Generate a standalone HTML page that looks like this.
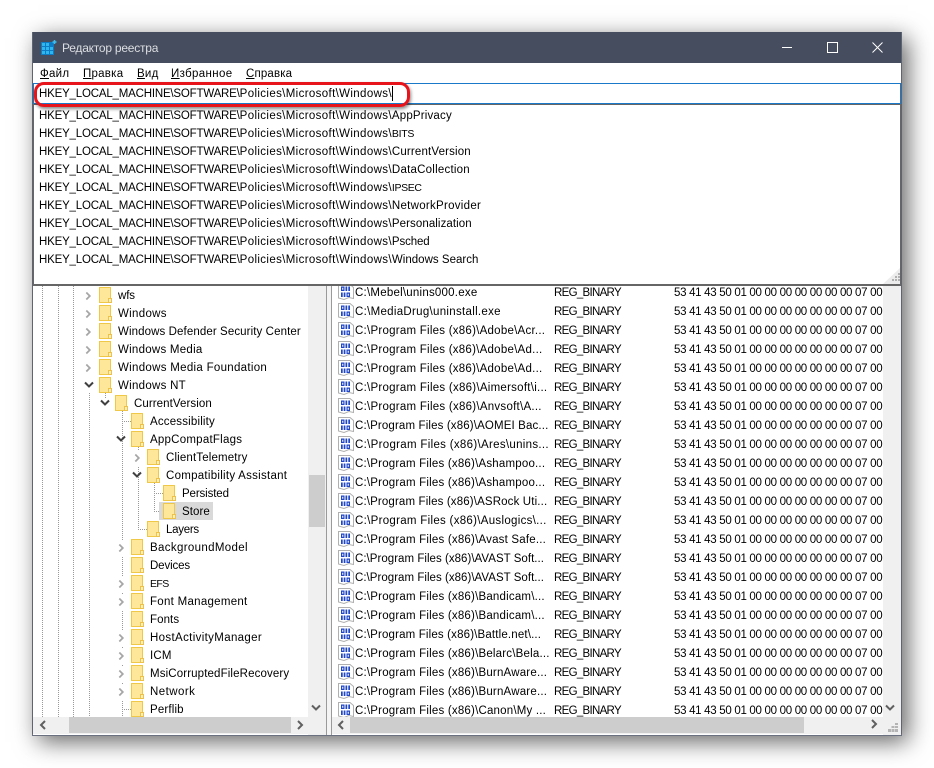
<!DOCTYPE html>
<html lang="ru"><head><meta charset="utf-8"><title>Редактор реестра</title>
<style>
html,body{margin:0;padding:0;width:934px;height:768px;overflow:hidden;background:#fff}
body{position:relative;font:12px/16px "Liberation Sans",sans-serif;color:#000}
#win{position:absolute;left:32px;top:32px;width:870px;height:704px;background:#fff;box-shadow:6px 6px 22px rgba(0,0,0,.6)}
.a{position:absolute;white-space:pre}
.t{position:absolute;white-space:pre;font-size:11.5px;letter-spacing:.25px;height:16px;line-height:16px;margin-top:1px}
.n{letter-spacing:.2px}
.b{letter-spacing:-.7px}
.d{letter-spacing:-.3px}
.p{letter-spacing:-.19px}
.q{letter-spacing:.36px}
svg.i{position:absolute;overflow:visible}
svg.i[width="7"]{background:#fff;box-shadow:0 0 0 3px #fff;transform:translateY(1px)}
#tree,#list,#drop{position:absolute;overflow:hidden}
.v{position:absolute;width:1px;background:repeating-linear-gradient(#999 0 1px,transparent 1px 2px)}
.h{position:absolute;height:1px;background:repeating-linear-gradient(90deg,#999 0 1px,transparent 1px 2px)}
u{text-decoration:underline}
</style></head><body>
<svg width="0" height="0" style="position:absolute"><defs>
<symbol id="f" viewBox="0 0 13 16"><path d="M.5.5H11.500V15.500H.5Z" fill="#ffe799" stroke="#f0c848"/><path d="M9.500 11.500H12.500V15.500H9.500Z" fill="#fff0c0" stroke="#eec24a"/></symbol>
<symbol id="r" viewBox="0 0 16 16"><path d="M.5.5H12L15.500 3.500V14.500L11 13.500L6 15.500L.5 14Z" fill="#fff" stroke="#b0b0b0"/><path d="M3 2.500h3.500v4.500H3zM7.500 2.500h1.700v4.500H7.500zM10.300 2.500h1.700v4.500h-1.700zM3 8.500h1.700v4.500H3zM5.700 8.500h1.700v4.500H5.700zM8.500 8.500h3.500v4.500H8.500z" fill="#1f46c8"/><path d="M4.200 3.700h1.100v2.100H4.200zM9.700 9.700h1.100v2.100H9.700z" fill="#fff"/></symbol>
<symbol id="cr" viewBox="0 0 8 10"><path d="M1.500 1L5.500 5L1.500 9" fill="none" stroke="#a6a6a6" stroke-width="2"/></symbol>
<symbol id="cd" viewBox="0 0 10 8"><path d="M1 1.500L5 5.500L9 1.500" fill="none" stroke="#404040" stroke-width="2"/></symbol>
<symbol id="sl" viewBox="0 0 8 10"><path d="M6 1L2 5L6 9" fill="none" stroke="#606060" stroke-width="2"/></symbol>
<symbol id="sr" viewBox="0 0 8 10"><path d="M2 1L6 5L2 9" fill="none" stroke="#606060" stroke-width="2"/></symbol>
<symbol id="sd" viewBox="0 0 10 8"><path d="M1 1.500L5 5.500L9 1.500" fill="none" stroke="#606060" stroke-width="2"/></symbol>
</defs></svg>

<div id="win"></div>
<!-- frame -->
<div class="a" style="left:32px;top:32px;width:870px;height:31px;background:#464d5e"></div>
<div class="a" style="left:32px;top:32px;width:1px;height:704px;background:#5e6472"></div>
<div class="a" style="left:901px;top:32px;width:1px;height:704px;background:#5e6472"></div>
<div class="a" style="left:32px;top:734px;width:870px;height:2px;background:#6a7080"></div>

<!-- title -->
<svg class="i" style="left:41px;top:40px" width="16" height="15"><rect x="0" y="2" width="13" height="13" fill="#0e7cc4"/><path d="M1 3h3v3H1zM5 3h3v3H5zM1 7h3v3H1zM5 7h3v3H5zM9 7h3v3H9zM1 11h3v3H1zM5 11h3v3H5zM9 11h3v3H9z" fill="#2fb6ee"/><path d="M11.500 2h4M13.500 0v4" stroke="#3cc0f2" stroke-width="1.500"/></svg>
<div class="t" style="left:62px;top:39px;color:#dcdee2;font-size:12px;letter-spacing:-.23px">Редактор реестра</div>
<svg class="i" style="left:782px;top:47px" width="12" height="1"><rect width="10" height="1" fill="#fff"/></svg>
<div class="a" style="left:827px;top:42px;width:9px;height:9px;border:1px solid #fff"></div>
<svg class="i" style="left:872px;top:42px" width="11" height="11"><path d="M.5.5L10.500 10.500M10.500.5L.5 10.500" stroke="#fff" fill="none"/></svg>

<!-- menu -->
<div class="t" style="left:40px;top:65px"><u>Ф</u>айл</div>
<div class="t" style="left:83px;top:65px;letter-spacing:.25px"><u>П</u>равка</div>
<div class="t" style="left:137px;top:65px"><u>В</u>ид</div>
<div class="t" style="left:171px;top:65px;letter-spacing:.35px"><u>И</u>збранное</div>
<div class="t" style="left:246px;top:65px;letter-spacing:.15px"><u>С</u>правка</div>

<!-- tree -->
<div id="tree" style="left:33px;top:286px;width:293px;height:449px;background:#fff">
<div style="position:absolute;left:-33px;top:-286px;width:934px;height:768px">
<div class="v" style="left:42px;top:286px;height:431px"></div>
<div class="v" style="left:58px;top:286px;height:431px"></div>
<div class="v" style="left:73px;top:286px;height:431px"></div>
<div class="v" style="left:89px;top:393px;height:324px"></div>
<div class="v" style="left:105px;top:393px;height:5px"></div>
<div class="v" style="left:122px;top:411px;height:306px"></div>
<div class="v" style="left:138px;top:447px;height:83px"></div>
<div class="v" style="left:154px;top:483px;height:29px"></div>
<div class="h" style="left:122px;top:421px;height:1px;width:9px"></div>
<div class="h" style="left:138px;top:529px;width:9px"></div>
<div class="h" style="left:154px;top:493px;width:9px"></div>
<div class="h" style="left:154px;top:511px;width:9px"></div>
<div class="h" style="left:122px;top:709px;width:9px"></div>

<div class="a" style="left:159px;top:502px;width:54px;height:18px;background:#d9d9d9"></div>

<svg class="i" style="left:85px;top:290px" width="7" height="10"><use href="#cr"/></svg><svg class="i" style="left:99px;top:287px" width="13" height="16"><use href="#f"/></svg><div class="t" style="left:118px;top:287px;letter-spacing:-.1px">wfs</div>
<svg class="i" style="left:85px;top:308px" width="7" height="10"><use href="#cr"/></svg><svg class="i" style="left:99px;top:305px" width="13" height="16"><use href="#f"/></svg><div class="t" style="left:118px;top:305px;letter-spacing:.31px">Windows</div>
<svg class="i" style="left:85px;top:326px" width="7" height="10"><use href="#cr"/></svg><svg class="i" style="left:99px;top:323px" width="13" height="16"><use href="#f"/></svg><div class="t" style="left:118px;top:323px;letter-spacing:.1px">Windows Defender Security Center</div>
<svg class="i" style="left:85px;top:344px" width="7" height="10"><use href="#cr"/></svg><svg class="i" style="left:99px;top:341px" width="13" height="16"><use href="#f"/></svg><div class="t" style="left:118px;top:341px;letter-spacing:.26px">Windows Media</div>
<svg class="i" style="left:85px;top:362px" width="7" height="10"><use href="#cr"/></svg><svg class="i" style="left:99px;top:359px" width="13" height="16"><use href="#f"/></svg><div class="t" style="left:118px;top:359px;letter-spacing:.3px">Windows Media Foundation</div>
<svg class="i" style="left:84px;top:381px" width="10" height="8"><use href="#cd"/></svg><svg class="i" style="left:99px;top:377px" width="13" height="16"><use href="#f"/></svg><div class="t" style="left:118px;top:377px;letter-spacing:.28px">Windows NT</div>
<svg class="i" style="left:100px;top:399px" width="10" height="8"><use href="#cd"/></svg><svg class="i" style="left:115px;top:395px" width="13" height="16"><use href="#f"/></svg><div class="t" style="left:134px;top:395px;letter-spacing:.08px">CurrentVersion</div>
<svg class="i" style="left:131px;top:413px" width="13" height="16"><use href="#f"/></svg><div class="t" style="left:150px;top:413px;letter-spacing:.18px">Accessibility</div>
<svg class="i" style="left:116px;top:435px" width="10" height="8"><use href="#cd"/></svg><svg class="i" style="left:131px;top:431px" width="13" height="16"><use href="#f"/></svg><div class="t" style="left:150px;top:431px;letter-spacing:.24px">AppCompatFlags</div>
<svg class="i" style="left:134px;top:452px" width="7" height="10"><use href="#cr"/></svg><svg class="i" style="left:147px;top:449px" width="13" height="16"><use href="#f"/></svg><div class="t" style="left:166px;top:449px;letter-spacing:.15px">ClientTelemetry</div>
<svg class="i" style="left:132px;top:471px" width="10" height="8"><use href="#cd"/></svg><svg class="i" style="left:147px;top:467px" width="13" height="16"><use href="#f"/></svg><div class="t" style="left:166px;top:467px;letter-spacing:.27px">Compatibility Assistant</div>
<svg class="i" style="left:163px;top:485px" width="13" height="16"><use href="#f"/></svg><div class="t" style="left:182px;top:485px;letter-spacing:-.12px">Persisted</div>
<svg class="i" style="left:163px;top:503px" width="13" height="16"><use href="#f"/></svg><div class="t" style="left:182px;top:503px;letter-spacing:.08px">Store</div>
<svg class="i" style="left:147px;top:521px" width="13" height="16"><use href="#f"/></svg><div class="t" style="left:166px;top:521px;letter-spacing:-.28px">Layers</div>
<svg class="i" style="left:118px;top:542px" width="7" height="10"><use href="#cr"/></svg><svg class="i" style="left:131px;top:539px" width="13" height="16"><use href="#f"/></svg><div class="t" style="left:150px;top:539px;letter-spacing:.35px">BackgroundModel</div>
<svg class="i" style="left:131px;top:557px" width="13" height="16"><use href="#f"/></svg><div class="t" style="left:150px;top:557px;letter-spacing:-.12px">Devices</div>
<svg class="i" style="left:118px;top:578px" width="7" height="10"><use href="#cr"/></svg><svg class="i" style="left:131px;top:575px" width="13" height="16"><use href="#f"/></svg><div class="t" style="left:150px;top:575px;font-size:10.5px;letter-spacing:-.6px">EFS</div>
<svg class="i" style="left:118px;top:596px" width="7" height="10"><use href="#cr"/></svg><svg class="i" style="left:131px;top:593px" width="13" height="16"><use href="#f"/></svg><div class="t" style="left:150px;top:593px;letter-spacing:.28px">Font Management</div>
<svg class="i" style="left:131px;top:611px" width="13" height="16"><use href="#f"/></svg><div class="t" style="left:150px;top:611px;letter-spacing:.08px">Fonts</div>
<svg class="i" style="left:118px;top:632px" width="7" height="10"><use href="#cr"/></svg><svg class="i" style="left:131px;top:629px" width="13" height="16"><use href="#f"/></svg><div class="t" style="left:150px;top:629px;letter-spacing:.35px">HostActivityManager</div>
<svg class="i" style="left:118px;top:650px" width="7" height="10"><use href="#cr"/></svg><svg class="i" style="left:131px;top:647px" width="13" height="16"><use href="#f"/></svg><div class="t" style="left:150px;top:647px;letter-spacing:.2px">ICM</div>
<svg class="i" style="left:118px;top:668px" width="7" height="10"><use href="#cr"/></svg><svg class="i" style="left:131px;top:665px" width="13" height="16"><use href="#f"/></svg><div class="t" style="left:150px;top:665px;letter-spacing:.13px">MsiCorruptedFileRecovery</div>
<svg class="i" style="left:118px;top:686px" width="7" height="10"><use href="#cr"/></svg><svg class="i" style="left:131px;top:683px" width="13" height="16"><use href="#f"/></svg><div class="t" style="left:150px;top:683px;letter-spacing:.45px">Network</div>
<svg class="i" style="left:131px;top:701px" width="13" height="16"><use href="#f"/></svg><div class="t" style="left:150px;top:701px;letter-spacing:.16px">Perflib</div>

<!-- tree scrollbars -->
<div class="a" style="left:308px;top:286px;width:18px;height:449px;background:#f0f0f0"></div>
<div class="a" style="left:309px;top:475px;width:16px;height:52px;background:#cdcdcd"></div>
<svg class="i" style="left:311px;top:704px" width="10" height="8"><use href="#sd"/></svg>
<div class="a" style="left:33px;top:717px;width:293px;height:17px;background:#f0f0f0"></div>
<div class="a" style="left:69px;top:717px;width:222px;height:16px;background:#cdcdcd"></div>
<svg class="i" style="left:39px;top:720px" width="8" height="10"><use href="#sl"/></svg>
<svg class="i" style="left:296px;top:720px" width="8" height="10"><use href="#sr"/></svg>
</div></div>

<!-- splitter -->
<div class="a" style="left:326px;top:286px;width:6px;height:449px;background:#f4f4f4;border-left:1px solid #9a9a9a;border-right:1px solid #9a9a9a;box-sizing:border-box"></div>

<!-- list -->
<div id="list" style="left:332px;top:286px;width:569px;height:449px;background:#fff">
<div style="position:absolute;left:-332px;top:-286px;width:934px;height:768px">
<svg class="i" style="left:338px;top:284px" width="16" height="16"><use href="#r"/></svg><div class="t n" style="left:355px;top:284px;letter-spacing:.23px">C:\Mebel\unins000.exe</div><div class="t b" style="left:554px;top:284px">REG_BINARY</div>
<svg class="i" style="left:338px;top:303px" width="16" height="16"><use href="#r"/></svg><div class="t n" style="left:355px;top:303px;letter-spacing:.3px">C:\MediaDrug\uninstall.exe</div><div class="t b" style="left:554px;top:303px">REG_BINARY</div>
<svg class="i" style="left:338px;top:322px" width="16" height="16"><use href="#r"/></svg><div class="t n" style="left:355px;top:322px;letter-spacing:.25px">C:\Program Files (x86)\Adobe\Acr...</div><div class="t b" style="left:554px;top:322px">REG_BINARY</div>
<svg class="i" style="left:338px;top:341px" width="16" height="16"><use href="#r"/></svg><div class="t n" style="left:355px;top:341px;letter-spacing:.25px">C:\Program Files (x86)\Adobe\Ad...</div><div class="t b" style="left:554px;top:341px">REG_BINARY</div>
<svg class="i" style="left:338px;top:360px" width="16" height="16"><use href="#r"/></svg><div class="t n" style="left:355px;top:360px;letter-spacing:.25px">C:\Program Files (x86)\Adobe\Ad...</div><div class="t b" style="left:554px;top:360px">REG_BINARY</div>
<svg class="i" style="left:338px;top:379px" width="16" height="16"><use href="#r"/></svg><div class="t n" style="left:355px;top:379px;letter-spacing:.26px">C:\Program Files (x86)\Aimersoft\i...</div><div class="t b" style="left:554px;top:379px">REG_BINARY</div>
<svg class="i" style="left:338px;top:398px" width="16" height="16"><use href="#r"/></svg><div class="t n" style="left:355px;top:398px;letter-spacing:.26px">C:\Program Files (x86)\Anvsoft\A...</div><div class="t b" style="left:554px;top:398px">REG_BINARY</div>
<svg class="i" style="left:338px;top:417px" width="16" height="16"><use href="#r"/></svg><div class="t n" style="left:355px;top:417px;letter-spacing:.14px">C:\Program Files (x86)\AOMEI Bac...</div><div class="t b" style="left:554px;top:417px">REG_BINARY</div>
<svg class="i" style="left:338px;top:436px" width="16" height="16"><use href="#r"/></svg><div class="t n" style="left:355px;top:436px;letter-spacing:.31px">C:\Program Files (x86)\Ares\unins...</div><div class="t b" style="left:554px;top:436px">REG_BINARY</div>
<svg class="i" style="left:338px;top:455px" width="16" height="16"><use href="#r"/></svg><div class="t n" style="left:355px;top:455px">C:\Program Files (x86)\Ashampoo...</div><div class="t b" style="left:554px;top:455px">REG_BINARY</div>
<svg class="i" style="left:338px;top:474px" width="16" height="16"><use href="#r"/></svg><div class="t n" style="left:355px;top:474px">C:\Program Files (x86)\Ashampoo...</div><div class="t b" style="left:554px;top:474px">REG_BINARY</div>
<svg class="i" style="left:338px;top:493px" width="16" height="16"><use href="#r"/></svg><div class="t n" style="left:355px;top:493px;letter-spacing:.14px">C:\Program Files (x86)\ASRock Uti...</div><div class="t b" style="left:554px;top:493px">REG_BINARY</div>
<svg class="i" style="left:338px;top:512px" width="16" height="16"><use href="#r"/></svg><div class="t n" style="left:355px;top:512px;letter-spacing:.3px">C:\Program Files (x86)\Auslogics\...</div><div class="t b" style="left:554px;top:512px">REG_BINARY</div>
<svg class="i" style="left:338px;top:531px" width="16" height="16"><use href="#r"/></svg><div class="t n" style="left:355px;top:531px">C:\Program Files (x86)\Avast Safe...</div><div class="t b" style="left:554px;top:531px">REG_BINARY</div>
<svg class="i" style="left:338px;top:550px" width="16" height="16"><use href="#r"/></svg><div class="t n" style="left:355px;top:550px;letter-spacing:.03px">C:\Program Files (x86)\AVAST Soft...</div><div class="t b" style="left:554px;top:550px">REG_BINARY</div>
<svg class="i" style="left:338px;top:569px" width="16" height="16"><use href="#r"/></svg><div class="t n" style="left:355px;top:569px;letter-spacing:.03px">C:\Program Files (x86)\AVAST Soft...</div><div class="t b" style="left:554px;top:569px">REG_BINARY</div>
<svg class="i" style="left:338px;top:588px" width="16" height="16"><use href="#r"/></svg><div class="t n" style="left:355px;top:588px">C:\Program Files (x86)\Bandicam\...</div><div class="t b" style="left:554px;top:588px">REG_BINARY</div>
<svg class="i" style="left:338px;top:607px" width="16" height="16"><use href="#r"/></svg><div class="t n" style="left:355px;top:607px">C:\Program Files (x86)\Bandicam\...</div><div class="t b" style="left:554px;top:607px">REG_BINARY</div>
<svg class="i" style="left:338px;top:626px" width="16" height="16"><use href="#r"/></svg><div class="t n" style="left:355px;top:626px;letter-spacing:.16px">C:\Program Files (x86)\Battle.net\...</div><div class="t b" style="left:554px;top:626px">REG_BINARY</div>
<svg class="i" style="left:338px;top:645px" width="16" height="16"><use href="#r"/></svg><div class="t n" style="left:355px;top:645px">C:\Program Files (x86)\Belarc\Bela...</div><div class="t b" style="left:554px;top:645px">REG_BINARY</div>
<svg class="i" style="left:338px;top:664px" width="16" height="16"><use href="#r"/></svg><div class="t n" style="left:355px;top:664px">C:\Program Files (x86)\BurnAware...</div><div class="t b" style="left:554px;top:664px">REG_BINARY</div>
<svg class="i" style="left:338px;top:683px" width="16" height="16"><use href="#r"/></svg><div class="t n" style="left:355px;top:683px">C:\Program Files (x86)\BurnAware...</div><div class="t b" style="left:554px;top:683px">REG_BINARY</div>
<svg class="i" style="left:338px;top:702px" width="16" height="16"><use href="#r"/></svg><div class="t n" style="left:355px;top:702px">C:\Program Files (x86)\Canon\My ...</div><div class="t b" style="left:554px;top:702px">REG_BINARY</div>

<div style="position:absolute;left:674px;top:284px;width:209px;height:433px;overflow:hidden">
<div class="t d" style="left:0;top:0">53 41 43 50 01 00 00 00 00 00 00 00 07 00</div>
<div class="t d" style="left:0;top:19px">53 41 43 50 01 00 00 00 00 00 00 00 07 00</div>
<div class="t d" style="left:0;top:38px">53 41 43 50 01 00 00 00 00 00 00 00 07 00</div>
<div class="t d" style="left:0;top:57px">53 41 43 50 01 00 00 00 00 00 00 00 07 00</div>
<div class="t d" style="left:0;top:76px">53 41 43 50 01 00 00 00 00 00 00 00 07 00</div>
<div class="t d" style="left:0;top:95px">53 41 43 50 01 00 00 00 00 00 00 00 07 00</div>
<div class="t d" style="left:0;top:114px">53 41 43 50 01 00 00 00 00 00 00 00 07 00</div>
<div class="t d" style="left:0;top:133px">53 41 43 50 01 00 00 00 00 00 00 00 07 00</div>
<div class="t d" style="left:0;top:152px">53 41 43 50 01 00 00 00 00 00 00 00 07 00</div>
<div class="t d" style="left:0;top:171px">53 41 43 50 01 00 00 00 00 00 00 00 07 00</div>
<div class="t d" style="left:0;top:190px">53 41 43 50 01 00 00 00 00 00 00 00 07 00</div>
<div class="t d" style="left:0;top:209px">53 41 43 50 01 00 00 00 00 00 00 00 07 00</div>
<div class="t d" style="left:0;top:228px">53 41 43 50 01 00 00 00 00 00 00 00 07 00</div>
<div class="t d" style="left:0;top:247px">53 41 43 50 01 00 00 00 00 00 00 00 07 00</div>
<div class="t d" style="left:0;top:266px">53 41 43 50 01 00 00 00 00 00 00 00 07 00</div>
<div class="t d" style="left:0;top:285px">53 41 43 50 01 00 00 00 00 00 00 00 07 00</div>
<div class="t d" style="left:0;top:304px">53 41 43 50 01 00 00 00 00 00 00 00 07 00</div>
<div class="t d" style="left:0;top:323px">53 41 43 50 01 00 00 00 00 00 00 00 07 00</div>
<div class="t d" style="left:0;top:342px">53 41 43 50 01 00 00 00 00 00 00 00 07 00</div>
<div class="t d" style="left:0;top:361px">53 41 43 50 01 00 00 00 00 00 00 00 07 00</div>
<div class="t d" style="left:0;top:380px">53 41 43 50 01 00 00 00 00 00 00 00 07 00</div>
<div class="t d" style="left:0;top:399px">53 41 43 50 01 00 00 00 00 00 00 00 07 00</div>
<div class="t d" style="left:0;top:418px">53 41 43 50 01 00 00 00 00 00 00 00 07 00</div>
</div>

<div class="a" style="left:883px;top:286px;width:18px;height:449px;background:#f0f0f0"></div>
<svg class="i" style="left:885px;top:704px" width="10" height="8"><use href="#sd"/></svg>
<div class="a" style="left:332px;top:717px;width:569px;height:17px;background:#f0f0f0"></div>
<div class="a" style="left:350px;top:717px;width:454px;height:16px;background:#cdcdcd"></div>
<svg class="i" style="left:337px;top:720px" width="8" height="10"><use href="#sl"/></svg>
<svg class="i" style="left:870px;top:719px" width="8" height="10"><use href="#sr"/></svg>
<svg class="i" style="left:888px;top:723px" width="12" height="10"><path d="M7 0h3v2H7zM3.500 3h3v2h-3zM7 3h3v2H7zM0 6h3v3H0zM3.500 6h3v3h-3zM7 6h3v3H7z" fill="#b4b4b4"/></svg>
</div></div>

<!-- address bar -->
<div class="a" style="left:33px;top:83px;width:866px;height:19px;border:1px solid #1a79c8;background:#fff"></div>
<div class="t" style="left:39px;top:85px"><span class="p">HKEY_LOCAL_MACHINE\SOFTWARE\</span><span class="q">Policies\Microsoft\Windows\</span></div>
<div class="a" style="left:392px;top:86px;width:1px;height:15px;background:#000"></div>

<!-- dropdown -->
<div id="drop" style="left:33px;top:104px;width:868px;height:182px;background:#fff;border-top:1px solid #666;border-bottom:2px solid #666;border-right:1px solid #666;border-left:1px solid #666;box-sizing:border-box"></div>
<div class="t" style="left:39px;top:107px"><span class="p">HKEY_LOCAL_MACHINE\SOFTWARE\</span><span class="q">Policies\Microsoft\Windows\</span><span style="letter-spacing:.18px">AppPrivacy</span></div>
<div class="t" style="left:39px;top:125px"><span class="p">HKEY_LOCAL_MACHINE\SOFTWARE\</span><span class="q">Policies\Microsoft\Windows\</span><span style="font-size:10.5px;letter-spacing:-.3px">BITS</span></div>
<div class="t" style="left:39px;top:143px"><span class="p">HKEY_LOCAL_MACHINE\SOFTWARE\</span><span class="q">Policies\Microsoft\Windows\</span><span style="letter-spacing:.16px">CurrentVersion</span></div>
<div class="t" style="left:39px;top:161px"><span class="p">HKEY_LOCAL_MACHINE\SOFTWARE\</span><span class="q">Policies\Microsoft\Windows\</span><span style="letter-spacing:.23px">DataCollection</span></div>
<div class="t" style="left:39px;top:179px"><span class="p">HKEY_LOCAL_MACHINE\SOFTWARE\</span><span class="q">Policies\Microsoft\Windows\</span><span style="font-size:10.5px;letter-spacing:-.35px">IPSEC</span></div>
<div class="t" style="left:39px;top:197px"><span class="p">HKEY_LOCAL_MACHINE\SOFTWARE\</span><span class="q">Policies\Microsoft\Windows\</span><span style="letter-spacing:.28px">NetworkProvider</span></div>
<div class="t" style="left:39px;top:215px"><span class="p">HKEY_LOCAL_MACHINE\SOFTWARE\</span><span class="q">Policies\Microsoft\Windows\</span><span style="letter-spacing:.08px">Personalization</span></div>
<div class="t" style="left:39px;top:233px"><span class="p">HKEY_LOCAL_MACHINE\SOFTWARE\</span><span class="q">Policies\Microsoft\Windows\</span><span style="letter-spacing:-.12px">Psched</span></div>
<div class="t" style="left:39px;top:251px"><span class="p">HKEY_LOCAL_MACHINE\SOFTWARE\</span><span class="q">Policies\Microsoft\Windows\</span><span style="letter-spacing:.02px">Windows Search</span></div>
<svg class="i" style="left:883px;top:268px" width="17" height="16"><path d="M17 0V16H0Z" fill="#ececec"/><path d="M12 8h2v2h-2zM12 11h2v2h-2zM9 11h2v2H9zM15 8h2v2h-2zM15 11h2v2h-2zM15 5h2v2h-2z" fill="#b0b0b0"/></svg>

<!-- red highlight -->
<div class="a" style="left:34px;top:82px;width:370px;height:19px;border:3px solid #e8141c;border-radius:10px;box-shadow:1px 2px 3px rgba(0,0,0,.45)"></div>
</body></html>
